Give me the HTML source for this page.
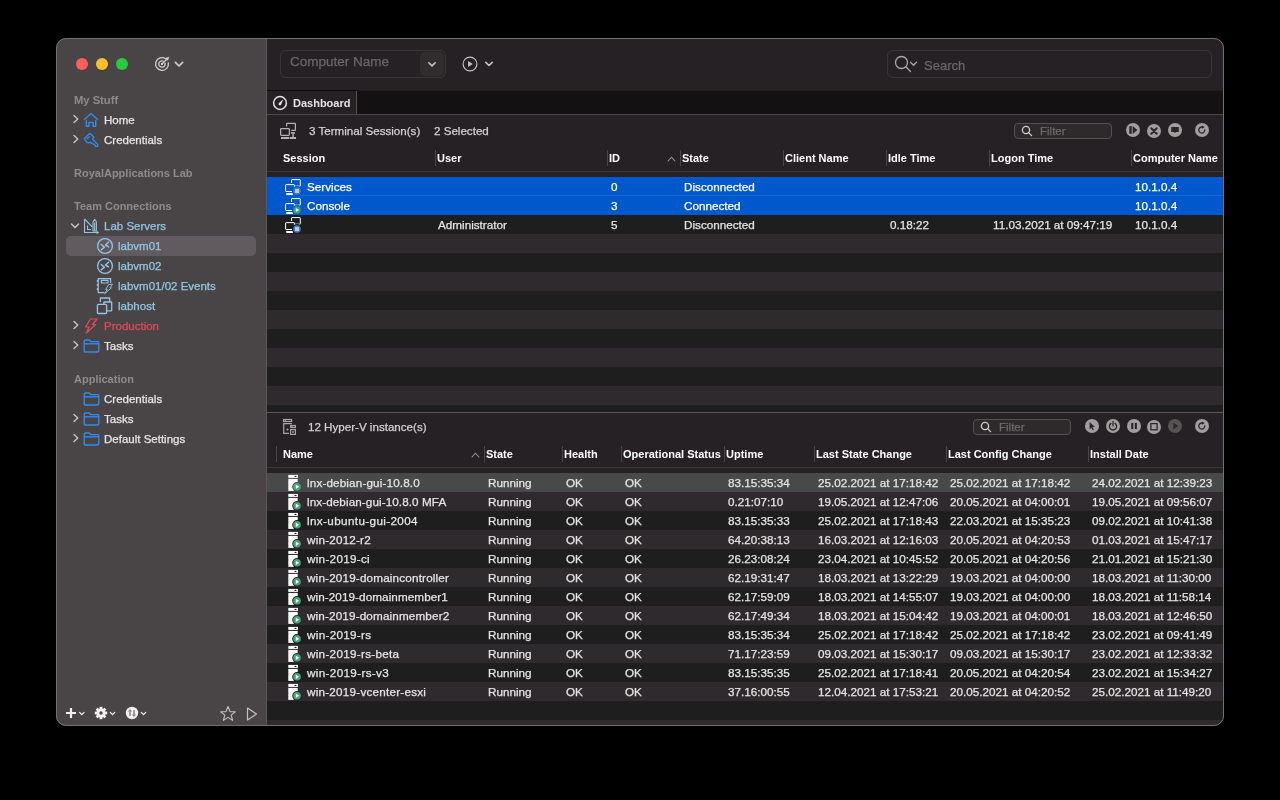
<!DOCTYPE html>
<html><head><meta charset="utf-8"><title>Royal TSX</title>
<style>html,body{margin:0;padding:0;background:#000;width:1280px;height:800px;overflow:hidden;font-family:"Liberation Sans", sans-serif;}</style>
</head><body>
<div id="win" style="position:absolute;left:0;top:0;width:1280px;height:800px;clip-path:inset(38px 56px 74px 56px round 10px);will-change:transform;"><div style="position:absolute;left:56px;top:38px;width:210px;height:688px;background:#494546;"></div><div style="position:absolute;left:266px;top:38px;width:1px;height:688px;background:#5b5859;"></div><div style="position:absolute;left:267px;top:38px;width:957px;height:52px;background:#262124;"></div><div style="position:absolute;left:267px;top:90px;width:957px;height:1px;background:#1d1d1d;"></div><div style="position:absolute;left:267px;top:90px;width:90px;height:1px;background:#100e0f;"></div><div style="position:absolute;left:267px;top:91px;width:957px;height:23px;background:#141112;"></div><div style="position:absolute;left:267px;top:91px;width:89px;height:23px;background:#252124;"></div><div style="position:absolute;left:356px;top:91px;width:1px;height:23px;background:#555253;"></div><div style="position:absolute;left:267px;top:114px;width:957px;height:1px;background:#4b4849;"></div><div style="position:absolute;left:267px;top:115px;width:957px;height:611px;background:#252124;"></div><div style="position:absolute;left:76px;top:58px;width:12px;height:12px;border-radius:50%;background:#fe5f57;"></div><div style="position:absolute;left:96px;top:58px;width:12px;height:12px;border-radius:50%;background:#febc2e;"></div><div style="position:absolute;left:116px;top:58px;width:12px;height:12px;border-radius:50%;background:#28c840;"></div><svg style="position:absolute;left:150px;top:52px;" width="36" height="24" viewBox="150 52 36 24">
<g fill="none" stroke="#d2cecf" stroke-width="1.3" stroke-linecap="round">
<path d="M165.67 58.76 A6.4 6.4 0 1 0 168.30 62.89"/>
<path d="M163.09 60.99 A3.2 3.2 0 1 0 165.09 63.17"/>
<path d="M162 64 L166.3 59.7"/>
<path d="M175.4 62.4 L179 66 L182.6 62.4" stroke-width="1.7" stroke-linejoin="round"/>
</g>
<circle cx="162" cy="64" r="1.15" fill="#d2cecf"/>
<path d="M169.3 56.7 L165.2 58.1 L167.9 60.8 Z" fill="#d2cecf"/>
</svg><div style="position:absolute;left:74px;top:94.52px;font-size:11.2px;line-height:1;font-weight:700;color:#8f8b8c;white-space:nowrap;">My Stuff</div><div style="position:absolute;left:74px;top:167.69px;font-size:11px;line-height:1;font-weight:700;color:#8f8b8c;white-space:nowrap;">RoyalApplications Lab</div><div style="position:absolute;left:74px;top:200.69px;font-size:11px;line-height:1;font-weight:700;color:#8f8b8c;white-space:nowrap;">Team Connections</div><div style="position:absolute;left:74px;top:373.69px;font-size:11px;line-height:1;font-weight:700;color:#8f8b8c;white-space:nowrap;">Application</div><svg style="position:absolute;left:72px;top:114.2px;" width="8" height="10" viewBox="0 0 8 10"><path d="M2 1.5 L5.8 5 L2 8.5" fill="none" stroke="#c8c4c5" stroke-width="1.4" stroke-linecap="round" stroke-linejoin="round"/></svg><svg style="position:absolute;left:80px;top:108px;" width="22" height="22" viewBox="80 108 22 22"><g fill="none" stroke="#2f8cf2" stroke-width="1.4" stroke-linecap="round" stroke-linejoin="round"><path d="M84.4 119.4 L91 113.4 L97.6 119.4"/><path d="M86.3 120.6 L86.3 126.3 L88.9 126.3 L88.9 122.4 L93.1 122.4 L93.1 126.3 L95.7 126.3 L95.7 120.6"/></g></svg><div style="position:absolute;left:104px;top:115.27px;font-size:11.5px;line-height:1;font-weight:400;color:#e9e5e6;white-space:nowrap;-webkit-text-stroke:0.25px #e9e5e6;">Home</div><svg style="position:absolute;left:72px;top:134.2px;" width="8" height="10" viewBox="0 0 8 10"><path d="M2 1.5 L5.8 5 L2 8.5" fill="none" stroke="#c8c4c5" stroke-width="1.4" stroke-linecap="round" stroke-linejoin="round"/></svg><svg style="position:absolute;left:80px;top:130px;" width="22" height="20" viewBox="80 130 22 20"><g fill="none" stroke="#2f8cf2" stroke-width="1.3" stroke-linecap="round" stroke-linejoin="round"><path d="M89.7 133.6 Q90 133.4 90.3 133.7 L93.6 136.8 Q93.8 137.1 93.5 137.5 L92.6 139.3 L97.7 144.4 L97.7 146.4 L95.6 146.4 L94.6 144.7 L90.1 142.4 L87.8 142.8 Q87.5 142.9 87.2 142.6 L84.5 138.9 Q84.3 138.6 84.6 138.3 Z"/><path d="M87.1 138.6 L89.4 136.8"/></g></svg><div style="position:absolute;left:104px;top:135.27px;font-size:11.5px;line-height:1;font-weight:400;color:#e9e5e6;white-space:nowrap;-webkit-text-stroke:0.25px #e9e5e6;">Credentials</div><svg style="position:absolute;left:70px;top:222px;" width="10" height="8" viewBox="0 0 10 8"><path d="M1.5 2 L5 5.6 L8.5 2" fill="none" stroke="#c8c4c5" stroke-width="1.4" stroke-linecap="round" stroke-linejoin="round"/></svg><svg style="position:absolute;left:80px;top:214px;" width="22" height="22" viewBox="80 214 22 22"><g fill="none" stroke="#93c6e4" stroke-width="1.1" stroke-linejoin="round"><path d="M84.5 219 L84.5 232.5 L98.5 232.5"/><path d="M84.5 219 L92.3 226.8"/><path d="M87.5 225.5 L87.5 229.5 L91 229.5"/><path d="M93 231 L93 222 L94.7 219.3 L96.4 222 L96.4 231 Z"/><path d="M94.7 222.5 L94.7 231"/><path d="M96.5 231.3 L98.8 232.5 L96.5 233.7" stroke-width="0.9"/></g></svg><div style="position:absolute;left:104px;top:221.27px;font-size:11.5px;line-height:1;font-weight:400;color:#93c6e4;white-space:nowrap;-webkit-text-stroke:0.25px #93c6e4;">Lab Servers</div><div style="position:absolute;left:66px;top:236px;width:190px;height:20px;border-radius:5px;background:#615b60;"></div><svg style="position:absolute;left:96px;top:237px;" width="18" height="18" viewBox="0 0 18 18"><g fill="none" stroke="#93c6e4" stroke-linecap="round" stroke-linejoin="round"><circle cx="9" cy="9" r="7.4" stroke-width="1.3"/><path d="M5.3 7.5 L8.4 10.2 L5.3 12.8" stroke-width="1.5"/><path d="M12.5 5.3 L9.5 8 L12.5 9.8" stroke-width="1.5"/></g></svg><div style="position:absolute;left:118px;top:241.27px;font-size:11.5px;line-height:1;font-weight:400;color:#93c6e4;white-space:nowrap;-webkit-text-stroke:0.25px #93c6e4;">labvm01</div><svg style="position:absolute;left:96px;top:257px;" width="18" height="18" viewBox="0 0 18 18"><g fill="none" stroke="#93c6e4" stroke-linecap="round" stroke-linejoin="round"><circle cx="9" cy="9" r="7.4" stroke-width="1.3"/><path d="M5.3 7.5 L8.4 10.2 L5.3 12.8" stroke-width="1.5"/><path d="M12.5 5.3 L9.5 8 L12.5 9.8" stroke-width="1.5"/></g></svg><div style="position:absolute;left:118px;top:261.27px;font-size:11.5px;line-height:1;font-weight:400;color:#93c6e4;white-space:nowrap;-webkit-text-stroke:0.25px #93c6e4;">labvm02</div><svg style="position:absolute;left:94px;top:274px;" width="22" height="22" viewBox="94 274 22 22"><g fill="none" stroke="#93c6e4" stroke-width="1.2" stroke-linejoin="round"><path d="M104.5 292.6 L98.2 292.6 L98.2 278.6 L110.6 278.6 L110.6 283"/><path d="M101.4 280.4 L107.9 280.4 L107.9 283 L101.4 283 Z"/><path d="M108.8 284.4 L112.5 284.4 L109.9 287.9 L111.4 287.9 L104.7 293.6 L107.3 289.4 L105.7 289.4 Z" stroke-width="0.95" fill="#494546"/></g><g fill="#93c6e4"><circle cx="97.6" cy="281" r="0.95"/><circle cx="97.6" cy="285" r="0.95"/><circle cx="97.6" cy="289" r="0.95"/></g></svg><div style="position:absolute;left:118px;top:281.27px;font-size:11.5px;line-height:1;font-weight:400;color:#93c6e4;white-space:nowrap;-webkit-text-stroke:0.25px #93c6e4;">labvm01/02 Events</div><svg style="position:absolute;left:94px;top:295px;" width="22" height="22" viewBox="94 295 22 22"><g stroke="#93c6e4" stroke-width="1.3" stroke-linejoin="round"><path d="M100.3 302 L100.3 298.4 Q100.3 298 100.7 298 L109.3 298 Q109.7 298 109.7 298.4 L109.7 301.8" fill="none"/><rect x="103.9" y="302" width="7.8" height="8.8" rx="0.6" fill="#494546"/><rect x="97.4" y="304.3" width="9.2" height="9.2" rx="1" fill="#494546"/></g></svg><div style="position:absolute;left:118px;top:301.27px;font-size:11.5px;line-height:1;font-weight:400;color:#93c6e4;white-space:nowrap;-webkit-text-stroke:0.25px #93c6e4;">labhost</div><svg style="position:absolute;left:72px;top:320.2px;" width="8" height="10" viewBox="0 0 8 10"><path d="M2 1.5 L5.8 5 L2 8.5" fill="none" stroke="#c8c4c5" stroke-width="1.4" stroke-linecap="round" stroke-linejoin="round"/></svg><svg style="position:absolute;left:84px;top:318px;" width="14" height="16" viewBox="0 0 14 16"><path d="M6.5 1 L13 1 L8.5 6.5 L11.5 6.5 L2.5 15 L5 9 L1.5 9 Z" fill="none" stroke="#e5485d" stroke-width="1.2" stroke-linejoin="round"/></svg><div style="position:absolute;left:104px;top:321.27px;font-size:11.5px;line-height:1;font-weight:400;color:#e5485d;white-space:nowrap;-webkit-text-stroke:0.25px #e5485d;">Production</div><svg style="position:absolute;left:72px;top:340.2px;" width="8" height="10" viewBox="0 0 8 10"><path d="M2 1.5 L5.8 5 L2 8.5" fill="none" stroke="#c8c4c5" stroke-width="1.4" stroke-linecap="round" stroke-linejoin="round"/></svg><svg style="position:absolute;left:83px;top:339px;" width="17" height="14" viewBox="0 0 17 14"><g fill="none" stroke="#2f8cf2" stroke-width="1.4" stroke-linejoin="round"><path d="M1.2 2.5 Q1.2 1 2.7 1 L6.2 1 L7.8 2.6 L14.5 2.6 Q15.8 2.6 15.8 4 L15.8 11.6 Q15.8 13 14.4 13 L2.6 13 Q1.2 13 1.2 11.6 Z"/><path d="M1.2 4.8 L15.8 4.8"/></g></svg><div style="position:absolute;left:104px;top:341.27px;font-size:11.5px;line-height:1;font-weight:400;color:#e9e5e6;white-space:nowrap;-webkit-text-stroke:0.25px #e9e5e6;">Tasks</div><svg style="position:absolute;left:83px;top:392px;" width="17" height="14" viewBox="0 0 17 14"><g fill="none" stroke="#2f8cf2" stroke-width="1.4" stroke-linejoin="round"><path d="M1.2 2.5 Q1.2 1 2.7 1 L6.2 1 L7.8 2.6 L14.5 2.6 Q15.8 2.6 15.8 4 L15.8 11.6 Q15.8 13 14.4 13 L2.6 13 Q1.2 13 1.2 11.6 Z"/><path d="M1.2 4.8 L15.8 4.8"/></g></svg><div style="position:absolute;left:104px;top:394.27px;font-size:11.5px;line-height:1;font-weight:400;color:#e9e5e6;white-space:nowrap;-webkit-text-stroke:0.25px #e9e5e6;">Credentials</div><svg style="position:absolute;left:72px;top:413.2px;" width="8" height="10" viewBox="0 0 8 10"><path d="M2 1.5 L5.8 5 L2 8.5" fill="none" stroke="#c8c4c5" stroke-width="1.4" stroke-linecap="round" stroke-linejoin="round"/></svg><svg style="position:absolute;left:83px;top:412px;" width="17" height="14" viewBox="0 0 17 14"><g fill="none" stroke="#2f8cf2" stroke-width="1.4" stroke-linejoin="round"><path d="M1.2 2.5 Q1.2 1 2.7 1 L6.2 1 L7.8 2.6 L14.5 2.6 Q15.8 2.6 15.8 4 L15.8 11.6 Q15.8 13 14.4 13 L2.6 13 Q1.2 13 1.2 11.6 Z"/><path d="M1.2 4.8 L15.8 4.8"/></g></svg><div style="position:absolute;left:104px;top:414.27px;font-size:11.5px;line-height:1;font-weight:400;color:#e9e5e6;white-space:nowrap;-webkit-text-stroke:0.25px #e9e5e6;">Tasks</div><svg style="position:absolute;left:72px;top:433.2px;" width="8" height="10" viewBox="0 0 8 10"><path d="M2 1.5 L5.8 5 L2 8.5" fill="none" stroke="#c8c4c5" stroke-width="1.4" stroke-linecap="round" stroke-linejoin="round"/></svg><svg style="position:absolute;left:83px;top:432px;" width="17" height="14" viewBox="0 0 17 14"><g fill="none" stroke="#2f8cf2" stroke-width="1.4" stroke-linejoin="round"><path d="M1.2 2.5 Q1.2 1 2.7 1 L6.2 1 L7.8 2.6 L14.5 2.6 Q15.8 2.6 15.8 4 L15.8 11.6 Q15.8 13 14.4 13 L2.6 13 Q1.2 13 1.2 11.6 Z"/><path d="M1.2 4.8 L15.8 4.8"/></g></svg><div style="position:absolute;left:104px;top:434.27px;font-size:11.5px;line-height:1;font-weight:400;color:#e9e5e6;white-space:nowrap;-webkit-text-stroke:0.25px #e9e5e6;">Default Settings</div><svg style="position:absolute;left:64px;top:705px;" width="56" height="16" viewBox="0 0 56 16"><g stroke="#f2eff0" stroke-linecap="butt"><path d="M7 3 L7 13 M2 8 L12 8" stroke-width="2.2"/><path d="M15.6 7.4 L17.8 9.6 L20 7.4" fill="none" stroke-width="1.3" stroke-linecap="round"/></g></svg><svg style="position:absolute;left:64px;top:705px;" width="56" height="16" viewBox="0 0 56 16"><g transform="translate(37 8)" fill="#f2eff0"><rect x="-1.4" y="-6.2" width="2.8" height="3" transform="rotate(0)"/><rect x="-1.4" y="-6.2" width="2.8" height="3" transform="rotate(45)"/><rect x="-1.4" y="-6.2" width="2.8" height="3" transform="rotate(90)"/><rect x="-1.4" y="-6.2" width="2.8" height="3" transform="rotate(135)"/><rect x="-1.4" y="-6.2" width="2.8" height="3" transform="rotate(180)"/><rect x="-1.4" y="-6.2" width="2.8" height="3" transform="rotate(225)"/><rect x="-1.4" y="-6.2" width="2.8" height="3" transform="rotate(270)"/><rect x="-1.4" y="-6.2" width="2.8" height="3" transform="rotate(315)"/><circle r="4.6"/></g><circle cx="37" cy="8" r="1.7" fill="#494546"/><path d="M46.3 7.4 L48.5 9.6 L50.7 7.4" fill="none" stroke="#f2eff0" stroke-width="1.3" stroke-linecap="round"/></svg><svg style="position:absolute;left:124px;top:705px;" width="30" height="16" viewBox="0 0 30 16"><circle cx="8" cy="8" r="6.2" fill="#f2eff0"/><g fill="#8f8b8c"><path d="M6 4 L8.2 6.6 L6.8 6.6 L6.8 11 L5.2 11 L5.2 6.6 L3.8 6.6 Z"/><path d="M10 12 L7.8 9.4 L9.2 9.4 L9.2 5 L10.8 5 L10.8 9.4 L12.2 9.4 Z"/></g><path d="M17.3 7.4 L19.5 9.6 L21.7 7.4" fill="none" stroke="#f2eff0" stroke-width="1.3" stroke-linecap="round"/></svg><svg style="position:absolute;left:219px;top:705px;" width="18" height="17" viewBox="0 0 18 17"><path d="M9 1.5 L11 6.6 L16.3 6.8 L12.2 10.2 L13.6 15.4 L9 12.4 L4.4 15.4 L5.8 10.2 L1.7 6.8 L7 6.6 Z" fill="none" stroke="#c5c1c2" stroke-width="1.1" stroke-linejoin="round"/></svg><svg style="position:absolute;left:245px;top:706px;" width="14" height="16" viewBox="0 0 14 16"><path d="M2.5 2 L11.5 8 L2.5 14 Z" fill="none" stroke="#c5c1c2" stroke-width="1.2" stroke-linejoin="round"/></svg><div style="position:absolute;left:280px;top:50px;width:164px;height:26px;border:1px solid #3a3638;border-radius:6px;"></div><div style="position:absolute;left:420px;top:52px;width:24px;height:24px;border-radius:5px;background:#312d2f;"></div><svg style="position:absolute;left:425px;top:57px;" width="14" height="14" viewBox="0 0 14 14"><path d="M3.8 5.8 L7 8.9 L10.2 5.8" fill="none" stroke="#c7c3c4" stroke-width="1.6" stroke-linecap="round" stroke-linejoin="round"/></svg><div style="position:absolute;left:290px;top:54.57px;font-size:13.5px;line-height:1;font-weight:400;color:#6b6769;white-space:nowrap;-webkit-text-stroke:0.25px #6b6769;">Computer Name</div><svg style="position:absolute;left:460px;top:55px;" width="36" height="18" viewBox="0 0 36 18"><circle cx="10" cy="9" r="6.9" fill="none" stroke="#c9c5c6" stroke-width="1.1"/><path d="M8.1 6.1 L12.7 9 L8.1 11.9 Z" fill="#c9c5c6"/><path d="M25.8 7.4 L29 10.5 L32.2 7.4" fill="none" stroke="#c9c5c6" stroke-width="1.6" stroke-linecap="round" stroke-linejoin="round"/></svg><div style="position:absolute;left:887px;top:50px;width:323px;height:26px;border:1px solid #3a3638;border-radius:6px;"></div><svg style="position:absolute;left:893px;top:54px;" width="30" height="20" viewBox="0 0 30 20"><g fill="none" stroke="#aaa6a7" stroke-width="1.3" stroke-linecap="round"><circle cx="8.5" cy="8.5" r="6"/><path d="M12.8 12.8 L17.5 17.5"/><path d="M17.5 8.3 L20.5 11.3 L23.5 8.3"/></g></svg><div style="position:absolute;left:924px;top:59.00px;font-size:13px;line-height:1;font-weight:400;color:#6b6769;white-space:nowrap;-webkit-text-stroke:0.25px #6b6769;">Search</div><svg style="position:absolute;left:272px;top:95px;" width="16" height="16" viewBox="0 0 16 16"><circle cx="8" cy="8" r="6.4" fill="none" stroke="#e6e2e3" stroke-width="1.5"/><path d="M11.2 4.2 L9.2 9.4 Q8.2 10.8 6.9 10 Q6 9 7 8 Z" fill="#e6e2e3"/></svg><div style="position:absolute;left:293px;top:97.69px;font-size:11px;line-height:1;font-weight:700;color:#e8e4e5;white-space:nowrap;">Dashboard</div><svg style="position:absolute;left:276px;top:118px;" width="24" height="24" viewBox="276 118 24 24"><g fill="none" stroke="#b5b1b2" stroke-width="1.2"><path d="M286.6 126.6 L286.6 123.9 Q286.6 123.4 287.1 123.4 L294.9 123.4 Q295.4 123.4 295.4 123.9 L295.4 129.9 Q295.4 130.4 294.9 130.4 L291.2 130.4"/><rect x="280.6" y="128.6" width="8.8" height="6.7" rx="0.8"/></g><g fill="#b5b1b2"><rect x="291" y="132.1" width="4" height="1.6"/><rect x="292.4" y="133.6" width="1.4" height="3.5"/><rect x="281" y="137" width="8.3" height="2"/><rect x="289.8" y="137" width="6.2" height="2"/></g></svg><div style="position:absolute;left:309px;top:125.18px;font-size:11.6px;line-height:1;font-weight:400;color:#d6d2d3;white-space:nowrap;-webkit-text-stroke:0.25px #d6d2d3;">3 Terminal Session(s)</div><div style="position:absolute;left:434px;top:125.18px;font-size:11.6px;line-height:1;font-weight:400;color:#d6d2d3;white-space:nowrap;-webkit-text-stroke:0.25px #d6d2d3;">2 Selected</div><div style="position:absolute;left:1014px;top:123px;width:96px;height:14px;border:1px solid #555153;border-radius:4px;background:#2e2a2c;"></div><svg style="position:absolute;left:1021px;top:125px;" width="12" height="12" viewBox="0 0 12 12"><g fill="none" stroke="#d4d0d1" stroke-width="1.3" stroke-linecap="round"><circle cx="5" cy="5" r="3.6"/><path d="M7.6 7.6 L10.6 10.6"/></g></svg><div style="position:absolute;left:1040px;top:126.27px;font-size:11.5px;line-height:1;font-weight:400;color:#6e6a6c;white-space:nowrap;-webkit-text-stroke:0.25px #6e6a6c;">Filter</div><svg style="position:absolute;left:1125px;top:122px;" width="16" height="16" viewBox="0 0 16 16"><circle cx="8" cy="8" r="7" fill="#a29ea0"/><rect x="4.3" y="4.2" width="2.4" height="7.6" fill="#2a2628"/><path d="M7.6 4 L12.4 8 L7.6 12 Z" fill="#2a2628"/></svg><svg style="position:absolute;left:1146px;top:123px;" width="16" height="16" viewBox="0 0 16 16"><circle cx="8" cy="8" r="7" fill="#a29ea0"/><path d="M5.3 5.3 L10.7 10.7 M10.7 5.3 L5.3 10.7" stroke="#2a2628" stroke-width="2" stroke-linecap="round"/></svg><svg style="position:absolute;left:1167px;top:122px;" width="16" height="16" viewBox="0 0 16 16"><circle cx="8" cy="8" r="7" fill="#a29ea0"/><path d="M4.2 5.1 L11.8 5.1 L11.8 9.9 L8.9 9.9 L8 11.2 L7.1 9.9 L4.2 9.9 Z" fill="#2a2628"/></svg><svg style="position:absolute;left:1194px;top:122px;" width="16" height="16" viewBox="0 0 16 16"><circle cx="8" cy="8" r="7" fill="#a29ea0"/><path d="M10.7 7.4 A3 3 0 1 1 8.4 5.1" fill="none" stroke="#2a2628" stroke-width="1.3"/><path d="M8 3.4 L10.7 4.9 L8.2 6.8 Z" fill="#2a2628"/></svg><div style="position:absolute;left:435px;top:150px;width:1px;height:16px;background:#4a4648;"></div><div style="position:absolute;left:607px;top:150px;width:1px;height:16px;background:#4a4648;"></div><div style="position:absolute;left:680px;top:150px;width:1px;height:16px;background:#4a4648;"></div><div style="position:absolute;left:783px;top:150px;width:1px;height:16px;background:#4a4648;"></div><div style="position:absolute;left:886px;top:150px;width:1px;height:16px;background:#4a4648;"></div><div style="position:absolute;left:989px;top:150px;width:1px;height:16px;background:#4a4648;"></div><div style="position:absolute;left:1131px;top:150px;width:1px;height:16px;background:#4a4648;"></div><div style="position:absolute;left:283px;top:152.69px;font-size:11px;line-height:1;font-weight:700;color:#ffffff;white-space:nowrap;">Session</div><div style="position:absolute;left:437px;top:152.69px;font-size:11px;line-height:1;font-weight:700;color:#ffffff;white-space:nowrap;">User</div><div style="position:absolute;left:609px;top:152.69px;font-size:11px;line-height:1;font-weight:700;color:#ffffff;white-space:nowrap;">ID</div><div style="position:absolute;left:682px;top:152.69px;font-size:11px;line-height:1;font-weight:700;color:#ffffff;white-space:nowrap;">State</div><div style="position:absolute;left:785px;top:152.69px;font-size:11px;line-height:1;font-weight:700;color:#ffffff;white-space:nowrap;">Client Name</div><div style="position:absolute;left:888px;top:152.69px;font-size:11px;line-height:1;font-weight:700;color:#ffffff;white-space:nowrap;">Idle Time</div><div style="position:absolute;left:991px;top:152.69px;font-size:11px;line-height:1;font-weight:700;color:#ffffff;white-space:nowrap;">Logon Time</div><div style="position:absolute;left:1133px;top:152.69px;font-size:11px;line-height:1;font-weight:700;color:#ffffff;white-space:nowrap;">Computer Name</div><svg style="position:absolute;left:660px;top:150px;" width="20" height="16" viewBox="660 150 20 16"><path d="M668 161 L671.5 157.2 L675 161" fill="none" stroke="#9b9798" stroke-width="1.1" stroke-linecap="round"/></svg><div style="position:absolute;left:267px;top:171px;width:957px;height:1px;background:#3c383a;"></div><div style="position:absolute;left:267px;top:177px;width:957px;height:19px;background:#0058cd;"></div><div style="position:absolute;left:267px;top:196px;width:957px;height:19px;background:#0058cd;"></div><div style="position:absolute;left:267px;top:215px;width:957px;height:19px;background:#1e1e1e;"></div><div style="position:absolute;left:267px;top:234px;width:957px;height:19px;background:#2f2a2d;"></div><div style="position:absolute;left:267px;top:253px;width:957px;height:19px;background:#1e1e1e;"></div><div style="position:absolute;left:267px;top:272px;width:957px;height:19px;background:#2f2a2d;"></div><div style="position:absolute;left:267px;top:291px;width:957px;height:19px;background:#1e1e1e;"></div><div style="position:absolute;left:267px;top:310px;width:957px;height:19px;background:#2f2a2d;"></div><div style="position:absolute;left:267px;top:329px;width:957px;height:19px;background:#1e1e1e;"></div><div style="position:absolute;left:267px;top:348px;width:957px;height:19px;background:#2f2a2d;"></div><div style="position:absolute;left:267px;top:367px;width:957px;height:19px;background:#1e1e1e;"></div><div style="position:absolute;left:267px;top:386px;width:957px;height:19px;background:#2f2a2d;"></div><div style="position:absolute;left:267px;top:405px;width:957px;height:7px;background:#1e1e1e;"></div><div style="position:absolute;left:286px;top:195px;width:938px;height:1px;background:#1a66d4;"></div><svg style="position:absolute;left:282px;top:177px;" width="22" height="19" viewBox="282 177 22 19"><g fill="none" stroke="#ffffff" stroke-width="1"><path d="M291.5 183 L291.5 180.1 Q291.5 179.6 292 179.6 L299.8 179.6 Q300.3 179.6 300.3 180.1 L300.3 185.7 Q300.3 186.2 299.8 186.2 L295 186.2"/><rect x="285.6" y="184.6" width="8.8" height="6.9" rx="0.5"/></g><rect x="286" y="193.1" width="7.3" height="1.8" rx="0.8" fill="#ffffff"/><circle cx="297" cy="191" r="5.1" fill="#0058cd"/><circle cx="297" cy="191" r="3.8" fill="#4a7ab0"/><rect x="295" y="189" width="4" height="4" fill="#bccbe2"/></svg><div style="position:absolute;left:307px;top:181.10px;font-size:11.7px;line-height:1;font-weight:400;color:#ffffff;white-space:nowrap;-webkit-text-stroke:0.25px #ffffff;">Services</div><div style="position:absolute;left:611px;top:181.10px;font-size:11.7px;line-height:1;font-weight:400;color:#ffffff;white-space:nowrap;-webkit-text-stroke:0.25px #ffffff;">0</div><div style="position:absolute;left:684px;top:181.10px;font-size:11.7px;line-height:1;font-weight:400;color:#ffffff;white-space:nowrap;-webkit-text-stroke:0.25px #ffffff;">Disconnected</div><div style="position:absolute;left:1135px;top:181.10px;font-size:11.7px;line-height:1;font-weight:400;color:#ffffff;white-space:nowrap;-webkit-text-stroke:0.25px #ffffff;">10.1.0.4</div><svg style="position:absolute;left:282px;top:196px;" width="22" height="19" viewBox="282 196 22 19"><g fill="none" stroke="#ffffff" stroke-width="1"><path d="M291.5 202 L291.5 199.1 Q291.5 198.6 292 198.6 L299.8 198.6 Q300.3 198.6 300.3 199.1 L300.3 204.7 Q300.3 205.2 299.8 205.2 L295 205.2"/><rect x="285.6" y="203.6" width="8.8" height="6.9" rx="0.5"/></g><rect x="286" y="212.1" width="7.3" height="1.8" rx="0.8" fill="#ffffff"/><circle cx="297" cy="210" r="5.1" fill="#0058cd"/><circle cx="297" cy="210" r="3.8" fill="#3b9d70"/><path d="M295.8 207.9 L299.2 210 L295.8 212.1 Z" fill="#ffffff"/></svg><div style="position:absolute;left:307px;top:200.10px;font-size:11.7px;line-height:1;font-weight:400;color:#ffffff;white-space:nowrap;-webkit-text-stroke:0.25px #ffffff;">Console</div><div style="position:absolute;left:611px;top:200.10px;font-size:11.7px;line-height:1;font-weight:400;color:#ffffff;white-space:nowrap;-webkit-text-stroke:0.25px #ffffff;">3</div><div style="position:absolute;left:684px;top:200.10px;font-size:11.7px;line-height:1;font-weight:400;color:#ffffff;white-space:nowrap;-webkit-text-stroke:0.25px #ffffff;">Connected</div><div style="position:absolute;left:1135px;top:200.10px;font-size:11.7px;line-height:1;font-weight:400;color:#ffffff;white-space:nowrap;-webkit-text-stroke:0.25px #ffffff;">10.1.0.4</div><svg style="position:absolute;left:282px;top:215px;" width="22" height="19" viewBox="282 215 22 19"><g fill="none" stroke="#ffffff" stroke-width="1"><path d="M291.5 221 L291.5 218.1 Q291.5 217.6 292 217.6 L299.8 217.6 Q300.3 217.6 300.3 218.1 L300.3 223.7 Q300.3 224.2 299.8 224.2 L295 224.2"/><rect x="285.6" y="222.6" width="8.8" height="6.9" rx="0.5"/></g><rect x="286" y="231.1" width="7.3" height="1.8" rx="0.8" fill="#ffffff"/><circle cx="297" cy="229" r="5.1" fill="#1e1e1e"/><circle cx="297" cy="229" r="3.8" fill="#3c7dc4"/><rect x="295" y="227" width="4" height="4" fill="#bccbe2"/></svg><div style="position:absolute;left:438px;top:219.10px;font-size:11.7px;line-height:1;font-weight:400;color:#e8e4e5;white-space:nowrap;-webkit-text-stroke:0.25px #e8e4e5;">Administrator</div><div style="position:absolute;left:611px;top:219.10px;font-size:11.7px;line-height:1;font-weight:400;color:#e8e4e5;white-space:nowrap;-webkit-text-stroke:0.25px #e8e4e5;">5</div><div style="position:absolute;left:684px;top:219.10px;font-size:11.7px;line-height:1;font-weight:400;color:#e8e4e5;white-space:nowrap;-webkit-text-stroke:0.25px #e8e4e5;">Disconnected</div><div style="position:absolute;left:890px;top:219.10px;font-size:11.7px;line-height:1;font-weight:400;color:#e8e4e5;white-space:nowrap;-webkit-text-stroke:0.25px #e8e4e5;">0.18:22</div><div style="position:absolute;left:993px;top:219.10px;font-size:11.7px;line-height:1;font-weight:400;color:#e8e4e5;white-space:nowrap;-webkit-text-stroke:0.25px #e8e4e5;">11.03.2021 at 09:47:19</div><div style="position:absolute;left:1135px;top:219.10px;font-size:11.7px;line-height:1;font-weight:400;color:#e8e4e5;white-space:nowrap;-webkit-text-stroke:0.25px #e8e4e5;">10.1.0.4</div><div style="position:absolute;left:267px;top:412px;width:957px;height:1px;background:#5a5758;"></div><svg style="position:absolute;left:276px;top:414px;" width="24" height="24" viewBox="276 414 24 24"><g fill="none" stroke="#aaa6a7" stroke-width="1.2"><rect x="283.5" y="419.5" width="8.1" height="2"/><path d="M291.9 423.6 L283.7 423.6 L283.7 433.3 L289 433.3"/><rect x="290.6" y="425.5" width="4.8" height="2"/><rect x="290.6" y="429.6" width="4.8" height="4.8"/></g><g fill="#aaa6a7"><rect x="284.8" y="420" width="1" height="1"/><rect x="291.6" y="426" width="1" height="1"/><circle cx="287.5" cy="429.5" r="1.1"/><rect x="292.2" y="431.2" width="1.6" height="1.6"/></g></svg><div style="position:absolute;left:308px;top:421.18px;font-size:11.6px;line-height:1;font-weight:400;color:#d6d2d3;white-space:nowrap;-webkit-text-stroke:0.25px #d6d2d3;">12 Hyper-V instance(s)</div><div style="position:absolute;left:973px;top:419px;width:96px;height:14px;border:1px solid #555153;border-radius:4px;background:#2e2a2c;"></div><svg style="position:absolute;left:980px;top:421px;" width="12" height="12" viewBox="0 0 12 12"><g fill="none" stroke="#d4d0d1" stroke-width="1.3" stroke-linecap="round"><circle cx="5" cy="5" r="3.6"/><path d="M7.6 7.6 L10.6 10.6"/></g></svg><div style="position:absolute;left:999px;top:422.27px;font-size:11.5px;line-height:1;font-weight:400;color:#6e6a6c;white-space:nowrap;-webkit-text-stroke:0.25px #6e6a6c;">Filter</div><svg style="position:absolute;left:1084px;top:418px;" width="16" height="16" viewBox="0 0 16 16"><circle cx="8" cy="8" r="7" fill="#a29ea0"/><path d="M5.6 3.9 L11 9 L8.4 9.1 L9.9 12 L8.8 12.6 L7.3 9.7 L5.6 11.4 Z" fill="#2a2628"/></svg><svg style="position:absolute;left:1105px;top:418px;" width="16" height="16" viewBox="0 0 16 16"><circle cx="8" cy="8" r="7" fill="#a29ea0"/><path d="M6 5.4 A3.6 3.6 0 1 0 10 5.4" fill="none" stroke="#2a2628" stroke-width="1.3" stroke-linecap="round"/><path d="M8 3.6 L8 7.8" stroke="#2a2628" stroke-width="1.3" stroke-linecap="round"/></svg><svg style="position:absolute;left:1126px;top:418px;" width="16" height="16" viewBox="0 0 16 16"><circle cx="8" cy="8" r="7" fill="#a29ea0"/><rect x="5.2" y="4.9" width="2.1" height="6.2" fill="#2a2628"/><rect x="8.8" y="4.9" width="2.1" height="6.2" fill="#2a2628"/></svg><svg style="position:absolute;left:1146px;top:419px;" width="16" height="16" viewBox="0 0 16 16"><circle cx="8" cy="8" r="7" fill="#a29ea0"/><rect x="4.9" y="4.6" width="6.2" height="6.2" fill="none" stroke="#2a2628" stroke-width="1.3"/></svg><svg style="position:absolute;left:1167px;top:418px;" width="16" height="16" viewBox="0 0 16 16"><circle cx="8" cy="8" r="7" fill="#575355"/><path d="M6.3 4.6 L11.3 8 L6.3 11.4 Z" fill="#2e2a2c"/></svg><svg style="position:absolute;left:1194px;top:418px;" width="16" height="16" viewBox="0 0 16 16"><circle cx="8" cy="8" r="7" fill="#a29ea0"/><path d="M10.7 7.4 A3 3 0 1 1 8.4 5.1" fill="none" stroke="#2a2628" stroke-width="1.3"/><path d="M8 3.4 L10.7 4.9 L8.2 6.8 Z" fill="#2a2628"/></svg><div style="position:absolute;left:276px;top:446px;width:1px;height:16px;background:#4a4648;"></div><div style="position:absolute;left:484px;top:446px;width:1px;height:16px;background:#4a4648;"></div><div style="position:absolute;left:562px;top:446px;width:1px;height:16px;background:#4a4648;"></div><div style="position:absolute;left:621px;top:446px;width:1px;height:16px;background:#4a4648;"></div><div style="position:absolute;left:724px;top:446px;width:1px;height:16px;background:#4a4648;"></div><div style="position:absolute;left:814px;top:446px;width:1px;height:16px;background:#4a4648;"></div><div style="position:absolute;left:946px;top:446px;width:1px;height:16px;background:#4a4648;"></div><div style="position:absolute;left:1088px;top:446px;width:1px;height:16px;background:#4a4648;"></div><div style="position:absolute;left:283px;top:448.69px;font-size:11px;line-height:1;font-weight:700;color:#ffffff;white-space:nowrap;">Name</div><div style="position:absolute;left:486px;top:448.69px;font-size:11px;line-height:1;font-weight:700;color:#ffffff;white-space:nowrap;">State</div><div style="position:absolute;left:564px;top:448.69px;font-size:11px;line-height:1;font-weight:700;color:#ffffff;white-space:nowrap;">Health</div><div style="position:absolute;left:623px;top:448.69px;font-size:11px;line-height:1;font-weight:700;color:#ffffff;white-space:nowrap;">Operational Status</div><div style="position:absolute;left:726px;top:448.69px;font-size:11px;line-height:1;font-weight:700;color:#ffffff;white-space:nowrap;">Uptime</div><div style="position:absolute;left:816px;top:448.69px;font-size:11px;line-height:1;font-weight:700;color:#ffffff;white-space:nowrap;">Last State Change</div><div style="position:absolute;left:948px;top:448.69px;font-size:11px;line-height:1;font-weight:700;color:#ffffff;white-space:nowrap;">Last Config Change</div><div style="position:absolute;left:1090px;top:448.69px;font-size:11px;line-height:1;font-weight:700;color:#ffffff;white-space:nowrap;">Install Date</div><svg style="position:absolute;left:465px;top:446px;" width="20" height="16" viewBox="465 446 20 16"><path d="M472 457 L475.5 453.2 L479 457" fill="none" stroke="#9b9798" stroke-width="1.1" stroke-linecap="round"/></svg><div style="position:absolute;left:267px;top:467px;width:957px;height:1px;background:#3c383a;"></div><div style="position:absolute;left:267px;top:473px;width:957px;height:19px;background:#484949;"></div><div style="position:absolute;left:267px;top:492px;width:957px;height:19px;background:#2f2a2d;"></div><div style="position:absolute;left:267px;top:511px;width:957px;height:19px;background:#1e1e1e;"></div><div style="position:absolute;left:267px;top:530px;width:957px;height:19px;background:#2f2a2d;"></div><div style="position:absolute;left:267px;top:549px;width:957px;height:19px;background:#1e1e1e;"></div><div style="position:absolute;left:267px;top:568px;width:957px;height:19px;background:#2f2a2d;"></div><div style="position:absolute;left:267px;top:587px;width:957px;height:19px;background:#1e1e1e;"></div><div style="position:absolute;left:267px;top:606px;width:957px;height:19px;background:#2f2a2d;"></div><div style="position:absolute;left:267px;top:625px;width:957px;height:19px;background:#1e1e1e;"></div><div style="position:absolute;left:267px;top:644px;width:957px;height:19px;background:#2f2a2d;"></div><div style="position:absolute;left:267px;top:663px;width:957px;height:19px;background:#1e1e1e;"></div><div style="position:absolute;left:267px;top:682px;width:957px;height:19px;background:#2f2a2d;"></div><div style="position:absolute;left:267px;top:701px;width:957px;height:19px;background:#1e1e1e;"></div><div style="position:absolute;left:267px;top:720px;width:957px;height:6px;background:#2f2a2d;"></div><svg style="position:absolute;left:288px;top:474px;" width="14" height="18" viewBox="0 0 14 18"><rect x="0.3" y="0.9" width="9.6" height="3" fill="#ffffff"/><ellipse cx="7.5" cy="2.4" rx="1.1" ry="0.65" fill="#222"/><rect x="0.3" y="4.9" width="9.4" height="12" fill="#ffffff"/><circle cx="9" cy="12.8" r="4.8" fill="#484949"/><circle cx="9" cy="12.8" r="3.8" fill="#46a37a"/><path d="M7.8 10.700000000000001 L11.2 12.8 L7.8 14.9 Z" fill="#ffffff"/></svg><div style="position:absolute;left:307px;top:477.10px;font-size:11.7px;line-height:1;font-weight:400;color:#e8e4e5;white-space:nowrap;-webkit-text-stroke:0.25px #e8e4e5;letter-spacing:0.145px;">lnx-debian-gui-10.8.0</div><div style="position:absolute;left:488px;top:477.10px;font-size:11.7px;line-height:1;font-weight:400;color:#e8e4e5;white-space:nowrap;-webkit-text-stroke:0.25px #e8e4e5;">Running</div><div style="position:absolute;left:566px;top:477.10px;font-size:11.7px;line-height:1;font-weight:400;color:#e8e4e5;white-space:nowrap;-webkit-text-stroke:0.25px #e8e4e5;">OK</div><div style="position:absolute;left:625px;top:477.10px;font-size:11.7px;line-height:1;font-weight:400;color:#e8e4e5;white-space:nowrap;-webkit-text-stroke:0.25px #e8e4e5;">OK</div><div style="position:absolute;left:728px;top:477.10px;font-size:11.7px;line-height:1;font-weight:400;color:#e8e4e5;white-space:nowrap;-webkit-text-stroke:0.25px #e8e4e5;">83.15:35:34</div><div style="position:absolute;left:818px;top:477.10px;font-size:11.7px;line-height:1;font-weight:400;color:#e8e4e5;white-space:nowrap;-webkit-text-stroke:0.25px #e8e4e5;">25.02.2021 at 17:18:42</div><div style="position:absolute;left:950px;top:477.10px;font-size:11.7px;line-height:1;font-weight:400;color:#e8e4e5;white-space:nowrap;-webkit-text-stroke:0.25px #e8e4e5;">25.02.2021 at 17:18:42</div><div style="position:absolute;left:1092px;top:477.10px;font-size:11.7px;line-height:1;font-weight:400;color:#e8e4e5;white-space:nowrap;-webkit-text-stroke:0.25px #e8e4e5;">24.02.2021 at 12:39:23</div><svg style="position:absolute;left:288px;top:493px;" width="14" height="18" viewBox="0 0 14 18"><rect x="0.3" y="0.9" width="9.6" height="3" fill="#ffffff"/><ellipse cx="7.5" cy="2.4" rx="1.1" ry="0.65" fill="#222"/><rect x="0.3" y="4.9" width="9.4" height="12" fill="#ffffff"/><circle cx="9" cy="12.8" r="4.8" fill="#2f2a2d"/><circle cx="9" cy="12.8" r="3.8" fill="#46a37a"/><path d="M7.8 10.700000000000001 L11.2 12.8 L7.8 14.9 Z" fill="#ffffff"/></svg><div style="position:absolute;left:307px;top:496.10px;font-size:11.7px;line-height:1;font-weight:400;color:#e8e4e5;white-space:nowrap;-webkit-text-stroke:0.25px #e8e4e5;letter-spacing:0.088px;">lnx-debian-gui-10.8.0 MFA</div><div style="position:absolute;left:488px;top:496.10px;font-size:11.7px;line-height:1;font-weight:400;color:#e8e4e5;white-space:nowrap;-webkit-text-stroke:0.25px #e8e4e5;">Running</div><div style="position:absolute;left:566px;top:496.10px;font-size:11.7px;line-height:1;font-weight:400;color:#e8e4e5;white-space:nowrap;-webkit-text-stroke:0.25px #e8e4e5;">OK</div><div style="position:absolute;left:625px;top:496.10px;font-size:11.7px;line-height:1;font-weight:400;color:#e8e4e5;white-space:nowrap;-webkit-text-stroke:0.25px #e8e4e5;">OK</div><div style="position:absolute;left:728px;top:496.10px;font-size:11.7px;line-height:1;font-weight:400;color:#e8e4e5;white-space:nowrap;-webkit-text-stroke:0.25px #e8e4e5;">0.21:07:10</div><div style="position:absolute;left:818px;top:496.10px;font-size:11.7px;line-height:1;font-weight:400;color:#e8e4e5;white-space:nowrap;-webkit-text-stroke:0.25px #e8e4e5;">19.05.2021 at 12:47:06</div><div style="position:absolute;left:950px;top:496.10px;font-size:11.7px;line-height:1;font-weight:400;color:#e8e4e5;white-space:nowrap;-webkit-text-stroke:0.25px #e8e4e5;">20.05.2021 at 04:00:01</div><div style="position:absolute;left:1092px;top:496.10px;font-size:11.7px;line-height:1;font-weight:400;color:#e8e4e5;white-space:nowrap;-webkit-text-stroke:0.25px #e8e4e5;">19.05.2021 at 09:56:07</div><svg style="position:absolute;left:288px;top:512px;" width="14" height="18" viewBox="0 0 14 18"><rect x="0.3" y="0.9" width="9.6" height="3" fill="#ffffff"/><ellipse cx="7.5" cy="2.4" rx="1.1" ry="0.65" fill="#222"/><rect x="0.3" y="4.9" width="9.4" height="12" fill="#ffffff"/><circle cx="9" cy="12.8" r="4.8" fill="#1e1e1e"/><circle cx="9" cy="12.8" r="3.8" fill="#46a37a"/><path d="M7.8 10.700000000000001 L11.2 12.8 L7.8 14.9 Z" fill="#ffffff"/></svg><div style="position:absolute;left:307px;top:515.10px;font-size:11.7px;line-height:1;font-weight:400;color:#e8e4e5;white-space:nowrap;-webkit-text-stroke:0.25px #e8e4e5;letter-spacing:0.367px;">lnx-ubuntu-gui-2004</div><div style="position:absolute;left:488px;top:515.10px;font-size:11.7px;line-height:1;font-weight:400;color:#e8e4e5;white-space:nowrap;-webkit-text-stroke:0.25px #e8e4e5;">Running</div><div style="position:absolute;left:566px;top:515.10px;font-size:11.7px;line-height:1;font-weight:400;color:#e8e4e5;white-space:nowrap;-webkit-text-stroke:0.25px #e8e4e5;">OK</div><div style="position:absolute;left:625px;top:515.10px;font-size:11.7px;line-height:1;font-weight:400;color:#e8e4e5;white-space:nowrap;-webkit-text-stroke:0.25px #e8e4e5;">OK</div><div style="position:absolute;left:728px;top:515.10px;font-size:11.7px;line-height:1;font-weight:400;color:#e8e4e5;white-space:nowrap;-webkit-text-stroke:0.25px #e8e4e5;">83.15:35:33</div><div style="position:absolute;left:818px;top:515.10px;font-size:11.7px;line-height:1;font-weight:400;color:#e8e4e5;white-space:nowrap;-webkit-text-stroke:0.25px #e8e4e5;">25.02.2021 at 17:18:43</div><div style="position:absolute;left:950px;top:515.10px;font-size:11.7px;line-height:1;font-weight:400;color:#e8e4e5;white-space:nowrap;-webkit-text-stroke:0.25px #e8e4e5;">22.03.2021 at 15:35:23</div><div style="position:absolute;left:1092px;top:515.10px;font-size:11.7px;line-height:1;font-weight:400;color:#e8e4e5;white-space:nowrap;-webkit-text-stroke:0.25px #e8e4e5;">09.02.2021 at 10:41:38</div><svg style="position:absolute;left:288px;top:531px;" width="14" height="18" viewBox="0 0 14 18"><rect x="0.3" y="0.9" width="9.6" height="3" fill="#ffffff"/><ellipse cx="7.5" cy="2.4" rx="1.1" ry="0.65" fill="#222"/><rect x="0.3" y="4.9" width="9.4" height="12" fill="#ffffff"/><circle cx="9" cy="12.8" r="4.8" fill="#2f2a2d"/><circle cx="9" cy="12.8" r="3.8" fill="#46a37a"/><path d="M7.8 10.700000000000001 L11.2 12.8 L7.8 14.9 Z" fill="#ffffff"/></svg><div style="position:absolute;left:307px;top:534.10px;font-size:11.7px;line-height:1;font-weight:400;color:#e8e4e5;white-space:nowrap;-webkit-text-stroke:0.25px #e8e4e5;letter-spacing:0.200px;">win-2012-r2</div><div style="position:absolute;left:488px;top:534.10px;font-size:11.7px;line-height:1;font-weight:400;color:#e8e4e5;white-space:nowrap;-webkit-text-stroke:0.25px #e8e4e5;">Running</div><div style="position:absolute;left:566px;top:534.10px;font-size:11.7px;line-height:1;font-weight:400;color:#e8e4e5;white-space:nowrap;-webkit-text-stroke:0.25px #e8e4e5;">OK</div><div style="position:absolute;left:625px;top:534.10px;font-size:11.7px;line-height:1;font-weight:400;color:#e8e4e5;white-space:nowrap;-webkit-text-stroke:0.25px #e8e4e5;">OK</div><div style="position:absolute;left:728px;top:534.10px;font-size:11.7px;line-height:1;font-weight:400;color:#e8e4e5;white-space:nowrap;-webkit-text-stroke:0.25px #e8e4e5;">64.20:38:13</div><div style="position:absolute;left:818px;top:534.10px;font-size:11.7px;line-height:1;font-weight:400;color:#e8e4e5;white-space:nowrap;-webkit-text-stroke:0.25px #e8e4e5;">16.03.2021 at 12:16:03</div><div style="position:absolute;left:950px;top:534.10px;font-size:11.7px;line-height:1;font-weight:400;color:#e8e4e5;white-space:nowrap;-webkit-text-stroke:0.25px #e8e4e5;">20.05.2021 at 04:20:53</div><div style="position:absolute;left:1092px;top:534.10px;font-size:11.7px;line-height:1;font-weight:400;color:#e8e4e5;white-space:nowrap;-webkit-text-stroke:0.25px #e8e4e5;">01.03.2021 at 15:47:17</div><svg style="position:absolute;left:288px;top:550px;" width="14" height="18" viewBox="0 0 14 18"><rect x="0.3" y="0.9" width="9.6" height="3" fill="#ffffff"/><ellipse cx="7.5" cy="2.4" rx="1.1" ry="0.65" fill="#222"/><rect x="0.3" y="4.9" width="9.4" height="12" fill="#ffffff"/><circle cx="9" cy="12.8" r="4.8" fill="#1e1e1e"/><circle cx="9" cy="12.8" r="3.8" fill="#46a37a"/><path d="M7.8 10.700000000000001 L11.2 12.8 L7.8 14.9 Z" fill="#ffffff"/></svg><div style="position:absolute;left:307px;top:553.10px;font-size:11.7px;line-height:1;font-weight:400;color:#e8e4e5;white-space:nowrap;-webkit-text-stroke:0.25px #e8e4e5;letter-spacing:0.290px;">win-2019-ci</div><div style="position:absolute;left:488px;top:553.10px;font-size:11.7px;line-height:1;font-weight:400;color:#e8e4e5;white-space:nowrap;-webkit-text-stroke:0.25px #e8e4e5;">Running</div><div style="position:absolute;left:566px;top:553.10px;font-size:11.7px;line-height:1;font-weight:400;color:#e8e4e5;white-space:nowrap;-webkit-text-stroke:0.25px #e8e4e5;">OK</div><div style="position:absolute;left:625px;top:553.10px;font-size:11.7px;line-height:1;font-weight:400;color:#e8e4e5;white-space:nowrap;-webkit-text-stroke:0.25px #e8e4e5;">OK</div><div style="position:absolute;left:728px;top:553.10px;font-size:11.7px;line-height:1;font-weight:400;color:#e8e4e5;white-space:nowrap;-webkit-text-stroke:0.25px #e8e4e5;">26.23:08:24</div><div style="position:absolute;left:818px;top:553.10px;font-size:11.7px;line-height:1;font-weight:400;color:#e8e4e5;white-space:nowrap;-webkit-text-stroke:0.25px #e8e4e5;">23.04.2021 at 10:45:52</div><div style="position:absolute;left:950px;top:553.10px;font-size:11.7px;line-height:1;font-weight:400;color:#e8e4e5;white-space:nowrap;-webkit-text-stroke:0.25px #e8e4e5;">20.05.2021 at 04:20:56</div><div style="position:absolute;left:1092px;top:553.10px;font-size:11.7px;line-height:1;font-weight:400;color:#e8e4e5;white-space:nowrap;-webkit-text-stroke:0.25px #e8e4e5;">21.01.2021 at 15:21:30</div><svg style="position:absolute;left:288px;top:569px;" width="14" height="18" viewBox="0 0 14 18"><rect x="0.3" y="0.9" width="9.6" height="3" fill="#ffffff"/><ellipse cx="7.5" cy="2.4" rx="1.1" ry="0.65" fill="#222"/><rect x="0.3" y="4.9" width="9.4" height="12" fill="#ffffff"/><circle cx="9" cy="12.8" r="4.8" fill="#2f2a2d"/><circle cx="9" cy="12.8" r="3.8" fill="#46a37a"/><path d="M7.8 10.700000000000001 L11.2 12.8 L7.8 14.9 Z" fill="#ffffff"/></svg><div style="position:absolute;left:307px;top:572.10px;font-size:11.7px;line-height:1;font-weight:400;color:#e8e4e5;white-space:nowrap;-webkit-text-stroke:0.25px #e8e4e5;letter-spacing:0.175px;">win-2019-domaincontroller</div><div style="position:absolute;left:488px;top:572.10px;font-size:11.7px;line-height:1;font-weight:400;color:#e8e4e5;white-space:nowrap;-webkit-text-stroke:0.25px #e8e4e5;">Running</div><div style="position:absolute;left:566px;top:572.10px;font-size:11.7px;line-height:1;font-weight:400;color:#e8e4e5;white-space:nowrap;-webkit-text-stroke:0.25px #e8e4e5;">OK</div><div style="position:absolute;left:625px;top:572.10px;font-size:11.7px;line-height:1;font-weight:400;color:#e8e4e5;white-space:nowrap;-webkit-text-stroke:0.25px #e8e4e5;">OK</div><div style="position:absolute;left:728px;top:572.10px;font-size:11.7px;line-height:1;font-weight:400;color:#e8e4e5;white-space:nowrap;-webkit-text-stroke:0.25px #e8e4e5;">62.19:31:47</div><div style="position:absolute;left:818px;top:572.10px;font-size:11.7px;line-height:1;font-weight:400;color:#e8e4e5;white-space:nowrap;-webkit-text-stroke:0.25px #e8e4e5;">18.03.2021 at 13:22:29</div><div style="position:absolute;left:950px;top:572.10px;font-size:11.7px;line-height:1;font-weight:400;color:#e8e4e5;white-space:nowrap;-webkit-text-stroke:0.25px #e8e4e5;">19.03.2021 at 04:00:00</div><div style="position:absolute;left:1092px;top:572.10px;font-size:11.7px;line-height:1;font-weight:400;color:#e8e4e5;white-space:nowrap;-webkit-text-stroke:0.25px #e8e4e5;">18.03.2021 at 11:30:00</div><svg style="position:absolute;left:288px;top:588px;" width="14" height="18" viewBox="0 0 14 18"><rect x="0.3" y="0.9" width="9.6" height="3" fill="#ffffff"/><ellipse cx="7.5" cy="2.4" rx="1.1" ry="0.65" fill="#222"/><rect x="0.3" y="4.9" width="9.4" height="12" fill="#ffffff"/><circle cx="9" cy="12.8" r="4.8" fill="#1e1e1e"/><circle cx="9" cy="12.8" r="3.8" fill="#46a37a"/><path d="M7.8 10.700000000000001 L11.2 12.8 L7.8 14.9 Z" fill="#ffffff"/></svg><div style="position:absolute;left:307px;top:591.10px;font-size:11.7px;line-height:1;font-weight:400;color:#e8e4e5;white-space:nowrap;-webkit-text-stroke:0.25px #e8e4e5;letter-spacing:0.086px;">win-2019-domainmember1</div><div style="position:absolute;left:488px;top:591.10px;font-size:11.7px;line-height:1;font-weight:400;color:#e8e4e5;white-space:nowrap;-webkit-text-stroke:0.25px #e8e4e5;">Running</div><div style="position:absolute;left:566px;top:591.10px;font-size:11.7px;line-height:1;font-weight:400;color:#e8e4e5;white-space:nowrap;-webkit-text-stroke:0.25px #e8e4e5;">OK</div><div style="position:absolute;left:625px;top:591.10px;font-size:11.7px;line-height:1;font-weight:400;color:#e8e4e5;white-space:nowrap;-webkit-text-stroke:0.25px #e8e4e5;">OK</div><div style="position:absolute;left:728px;top:591.10px;font-size:11.7px;line-height:1;font-weight:400;color:#e8e4e5;white-space:nowrap;-webkit-text-stroke:0.25px #e8e4e5;">62.17:59:09</div><div style="position:absolute;left:818px;top:591.10px;font-size:11.7px;line-height:1;font-weight:400;color:#e8e4e5;white-space:nowrap;-webkit-text-stroke:0.25px #e8e4e5;">18.03.2021 at 14:55:07</div><div style="position:absolute;left:950px;top:591.10px;font-size:11.7px;line-height:1;font-weight:400;color:#e8e4e5;white-space:nowrap;-webkit-text-stroke:0.25px #e8e4e5;">19.03.2021 at 04:00:00</div><div style="position:absolute;left:1092px;top:591.10px;font-size:11.7px;line-height:1;font-weight:400;color:#e8e4e5;white-space:nowrap;-webkit-text-stroke:0.25px #e8e4e5;">18.03.2021 at 11:58:14</div><svg style="position:absolute;left:288px;top:607px;" width="14" height="18" viewBox="0 0 14 18"><rect x="0.3" y="0.9" width="9.6" height="3" fill="#ffffff"/><ellipse cx="7.5" cy="2.4" rx="1.1" ry="0.65" fill="#222"/><rect x="0.3" y="4.9" width="9.4" height="12" fill="#ffffff"/><circle cx="9" cy="12.8" r="4.8" fill="#2f2a2d"/><circle cx="9" cy="12.8" r="3.8" fill="#46a37a"/><path d="M7.8 10.700000000000001 L11.2 12.8 L7.8 14.9 Z" fill="#ffffff"/></svg><div style="position:absolute;left:307px;top:610.10px;font-size:11.7px;line-height:1;font-weight:400;color:#e8e4e5;white-space:nowrap;-webkit-text-stroke:0.25px #e8e4e5;letter-spacing:0.152px;">win-2019-domainmember2</div><div style="position:absolute;left:488px;top:610.10px;font-size:11.7px;line-height:1;font-weight:400;color:#e8e4e5;white-space:nowrap;-webkit-text-stroke:0.25px #e8e4e5;">Running</div><div style="position:absolute;left:566px;top:610.10px;font-size:11.7px;line-height:1;font-weight:400;color:#e8e4e5;white-space:nowrap;-webkit-text-stroke:0.25px #e8e4e5;">OK</div><div style="position:absolute;left:625px;top:610.10px;font-size:11.7px;line-height:1;font-weight:400;color:#e8e4e5;white-space:nowrap;-webkit-text-stroke:0.25px #e8e4e5;">OK</div><div style="position:absolute;left:728px;top:610.10px;font-size:11.7px;line-height:1;font-weight:400;color:#e8e4e5;white-space:nowrap;-webkit-text-stroke:0.25px #e8e4e5;">62.17:49:34</div><div style="position:absolute;left:818px;top:610.10px;font-size:11.7px;line-height:1;font-weight:400;color:#e8e4e5;white-space:nowrap;-webkit-text-stroke:0.25px #e8e4e5;">18.03.2021 at 15:04:42</div><div style="position:absolute;left:950px;top:610.10px;font-size:11.7px;line-height:1;font-weight:400;color:#e8e4e5;white-space:nowrap;-webkit-text-stroke:0.25px #e8e4e5;">19.03.2021 at 04:00:01</div><div style="position:absolute;left:1092px;top:610.10px;font-size:11.7px;line-height:1;font-weight:400;color:#e8e4e5;white-space:nowrap;-webkit-text-stroke:0.25px #e8e4e5;">18.03.2021 at 12:46:50</div><svg style="position:absolute;left:288px;top:626px;" width="14" height="18" viewBox="0 0 14 18"><rect x="0.3" y="0.9" width="9.6" height="3" fill="#ffffff"/><ellipse cx="7.5" cy="2.4" rx="1.1" ry="0.65" fill="#222"/><rect x="0.3" y="4.9" width="9.4" height="12" fill="#ffffff"/><circle cx="9" cy="12.8" r="4.8" fill="#1e1e1e"/><circle cx="9" cy="12.8" r="3.8" fill="#46a37a"/><path d="M7.8 10.700000000000001 L11.2 12.8 L7.8 14.9 Z" fill="#ffffff"/></svg><div style="position:absolute;left:307px;top:629.10px;font-size:11.7px;line-height:1;font-weight:400;color:#e8e4e5;white-space:nowrap;-webkit-text-stroke:0.25px #e8e4e5;letter-spacing:0.300px;">win-2019-rs</div><div style="position:absolute;left:488px;top:629.10px;font-size:11.7px;line-height:1;font-weight:400;color:#e8e4e5;white-space:nowrap;-webkit-text-stroke:0.25px #e8e4e5;">Running</div><div style="position:absolute;left:566px;top:629.10px;font-size:11.7px;line-height:1;font-weight:400;color:#e8e4e5;white-space:nowrap;-webkit-text-stroke:0.25px #e8e4e5;">OK</div><div style="position:absolute;left:625px;top:629.10px;font-size:11.7px;line-height:1;font-weight:400;color:#e8e4e5;white-space:nowrap;-webkit-text-stroke:0.25px #e8e4e5;">OK</div><div style="position:absolute;left:728px;top:629.10px;font-size:11.7px;line-height:1;font-weight:400;color:#e8e4e5;white-space:nowrap;-webkit-text-stroke:0.25px #e8e4e5;">83.15:35:34</div><div style="position:absolute;left:818px;top:629.10px;font-size:11.7px;line-height:1;font-weight:400;color:#e8e4e5;white-space:nowrap;-webkit-text-stroke:0.25px #e8e4e5;">25.02.2021 at 17:18:42</div><div style="position:absolute;left:950px;top:629.10px;font-size:11.7px;line-height:1;font-weight:400;color:#e8e4e5;white-space:nowrap;-webkit-text-stroke:0.25px #e8e4e5;">25.02.2021 at 17:18:42</div><div style="position:absolute;left:1092px;top:629.10px;font-size:11.7px;line-height:1;font-weight:400;color:#e8e4e5;white-space:nowrap;-webkit-text-stroke:0.25px #e8e4e5;">23.02.2021 at 09:41:49</div><svg style="position:absolute;left:288px;top:645px;" width="14" height="18" viewBox="0 0 14 18"><rect x="0.3" y="0.9" width="9.6" height="3" fill="#ffffff"/><ellipse cx="7.5" cy="2.4" rx="1.1" ry="0.65" fill="#222"/><rect x="0.3" y="4.9" width="9.4" height="12" fill="#ffffff"/><circle cx="9" cy="12.8" r="4.8" fill="#2f2a2d"/><circle cx="9" cy="12.8" r="3.8" fill="#46a37a"/><path d="M7.8 10.700000000000001 L11.2 12.8 L7.8 14.9 Z" fill="#ffffff"/></svg><div style="position:absolute;left:307px;top:648.10px;font-size:11.7px;line-height:1;font-weight:400;color:#e8e4e5;white-space:nowrap;-webkit-text-stroke:0.25px #e8e4e5;letter-spacing:0.293px;">win-2019-rs-beta</div><div style="position:absolute;left:488px;top:648.10px;font-size:11.7px;line-height:1;font-weight:400;color:#e8e4e5;white-space:nowrap;-webkit-text-stroke:0.25px #e8e4e5;">Running</div><div style="position:absolute;left:566px;top:648.10px;font-size:11.7px;line-height:1;font-weight:400;color:#e8e4e5;white-space:nowrap;-webkit-text-stroke:0.25px #e8e4e5;">OK</div><div style="position:absolute;left:625px;top:648.10px;font-size:11.7px;line-height:1;font-weight:400;color:#e8e4e5;white-space:nowrap;-webkit-text-stroke:0.25px #e8e4e5;">OK</div><div style="position:absolute;left:728px;top:648.10px;font-size:11.7px;line-height:1;font-weight:400;color:#e8e4e5;white-space:nowrap;-webkit-text-stroke:0.25px #e8e4e5;">71.17:23:59</div><div style="position:absolute;left:818px;top:648.10px;font-size:11.7px;line-height:1;font-weight:400;color:#e8e4e5;white-space:nowrap;-webkit-text-stroke:0.25px #e8e4e5;">09.03.2021 at 15:30:17</div><div style="position:absolute;left:950px;top:648.10px;font-size:11.7px;line-height:1;font-weight:400;color:#e8e4e5;white-space:nowrap;-webkit-text-stroke:0.25px #e8e4e5;">09.03.2021 at 15:30:17</div><div style="position:absolute;left:1092px;top:648.10px;font-size:11.7px;line-height:1;font-weight:400;color:#e8e4e5;white-space:nowrap;-webkit-text-stroke:0.25px #e8e4e5;">23.02.2021 at 12:33:32</div><svg style="position:absolute;left:288px;top:664px;" width="14" height="18" viewBox="0 0 14 18"><rect x="0.3" y="0.9" width="9.6" height="3" fill="#ffffff"/><ellipse cx="7.5" cy="2.4" rx="1.1" ry="0.65" fill="#222"/><rect x="0.3" y="4.9" width="9.4" height="12" fill="#ffffff"/><circle cx="9" cy="12.8" r="4.8" fill="#1e1e1e"/><circle cx="9" cy="12.8" r="3.8" fill="#46a37a"/><path d="M7.8 10.700000000000001 L11.2 12.8 L7.8 14.9 Z" fill="#ffffff"/></svg><div style="position:absolute;left:307px;top:667.10px;font-size:11.7px;line-height:1;font-weight:400;color:#e8e4e5;white-space:nowrap;-webkit-text-stroke:0.25px #e8e4e5;letter-spacing:0.346px;">win-2019-rs-v3</div><div style="position:absolute;left:488px;top:667.10px;font-size:11.7px;line-height:1;font-weight:400;color:#e8e4e5;white-space:nowrap;-webkit-text-stroke:0.25px #e8e4e5;">Running</div><div style="position:absolute;left:566px;top:667.10px;font-size:11.7px;line-height:1;font-weight:400;color:#e8e4e5;white-space:nowrap;-webkit-text-stroke:0.25px #e8e4e5;">OK</div><div style="position:absolute;left:625px;top:667.10px;font-size:11.7px;line-height:1;font-weight:400;color:#e8e4e5;white-space:nowrap;-webkit-text-stroke:0.25px #e8e4e5;">OK</div><div style="position:absolute;left:728px;top:667.10px;font-size:11.7px;line-height:1;font-weight:400;color:#e8e4e5;white-space:nowrap;-webkit-text-stroke:0.25px #e8e4e5;">83.15:35:35</div><div style="position:absolute;left:818px;top:667.10px;font-size:11.7px;line-height:1;font-weight:400;color:#e8e4e5;white-space:nowrap;-webkit-text-stroke:0.25px #e8e4e5;">25.02.2021 at 17:18:41</div><div style="position:absolute;left:950px;top:667.10px;font-size:11.7px;line-height:1;font-weight:400;color:#e8e4e5;white-space:nowrap;-webkit-text-stroke:0.25px #e8e4e5;">20.05.2021 at 04:20:54</div><div style="position:absolute;left:1092px;top:667.10px;font-size:11.7px;line-height:1;font-weight:400;color:#e8e4e5;white-space:nowrap;-webkit-text-stroke:0.25px #e8e4e5;">23.02.2021 at 15:34:27</div><svg style="position:absolute;left:288px;top:683px;" width="14" height="18" viewBox="0 0 14 18"><rect x="0.3" y="0.9" width="9.6" height="3" fill="#ffffff"/><ellipse cx="7.5" cy="2.4" rx="1.1" ry="0.65" fill="#222"/><rect x="0.3" y="4.9" width="9.4" height="12" fill="#ffffff"/><circle cx="9" cy="12.8" r="4.8" fill="#2f2a2d"/><circle cx="9" cy="12.8" r="3.8" fill="#46a37a"/><path d="M7.8 10.700000000000001 L11.2 12.8 L7.8 14.9 Z" fill="#ffffff"/></svg><div style="position:absolute;left:307px;top:686.10px;font-size:11.7px;line-height:1;font-weight:400;color:#e8e4e5;white-space:nowrap;-webkit-text-stroke:0.25px #e8e4e5;letter-spacing:0.230px;">win-2019-vcenter-esxi</div><div style="position:absolute;left:488px;top:686.10px;font-size:11.7px;line-height:1;font-weight:400;color:#e8e4e5;white-space:nowrap;-webkit-text-stroke:0.25px #e8e4e5;">Running</div><div style="position:absolute;left:566px;top:686.10px;font-size:11.7px;line-height:1;font-weight:400;color:#e8e4e5;white-space:nowrap;-webkit-text-stroke:0.25px #e8e4e5;">OK</div><div style="position:absolute;left:625px;top:686.10px;font-size:11.7px;line-height:1;font-weight:400;color:#e8e4e5;white-space:nowrap;-webkit-text-stroke:0.25px #e8e4e5;">OK</div><div style="position:absolute;left:728px;top:686.10px;font-size:11.7px;line-height:1;font-weight:400;color:#e8e4e5;white-space:nowrap;-webkit-text-stroke:0.25px #e8e4e5;">37.16:00:55</div><div style="position:absolute;left:818px;top:686.10px;font-size:11.7px;line-height:1;font-weight:400;color:#e8e4e5;white-space:nowrap;-webkit-text-stroke:0.25px #e8e4e5;">12.04.2021 at 17:53:21</div><div style="position:absolute;left:950px;top:686.10px;font-size:11.7px;line-height:1;font-weight:400;color:#e8e4e5;white-space:nowrap;-webkit-text-stroke:0.25px #e8e4e5;">20.05.2021 at 04:20:52</div><div style="position:absolute;left:1092px;top:686.10px;font-size:11.7px;line-height:1;font-weight:400;color:#e8e4e5;white-space:nowrap;-webkit-text-stroke:0.25px #e8e4e5;">25.02.2021 at 11:49:20</div></div><div style="position:absolute;left:56px;top:38px;width:1166px;height:686px;border:1px solid #737071;border-radius:10px;pointer-events:none;"></div>
</body></html>
